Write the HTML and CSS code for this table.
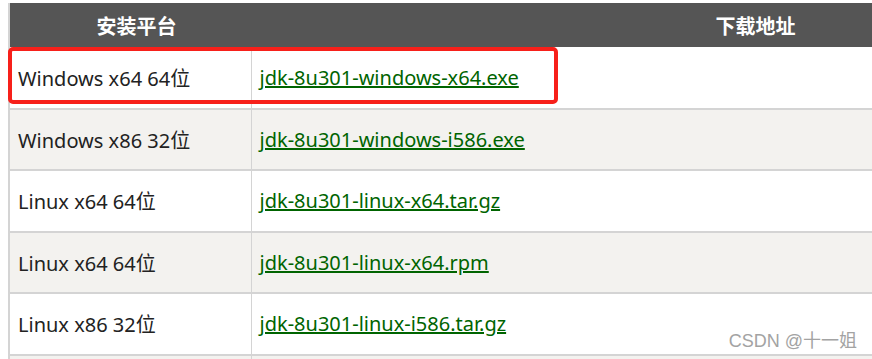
FILE: index.html
```html
<!DOCTYPE html>
<html lang="zh-CN">
<head>
    <meta charset="UTF-8">
    <title>JDK 8u301 下载</title>
    <link rel="stylesheet" href="styles.css">
</head>
<body>

    <div class="page">
        <table class="downloads">
            <thead>
                <tr>
                    <th class="col-platform">安装平台</th>
                    <th class="col-link">下载地址</th>
                </tr>
            </thead>
            <tbody>
                <tr>
                    <td>Windows x64 64位</td>
                    <td><a href="#">jdk-8u301-windows-x64.exe</a></td>
                </tr>
                <tr class="alt">
                    <td>Windows x86 32位</td>
                    <td><a href="#">jdk-8u301-windows-i586.exe</a></td>
                </tr>
                <tr>
                    <td>Linux x64 64位</td>
                    <td><a href="#">jdk-8u301-linux-x64.tar.gz</a></td>
                </tr>
                <tr class="alt">
                    <td>Linux x64 64位</td>
                    <td><a href="#">jdk-8u301-linux-x64.rpm</a></td>
                </tr>
                <tr>
                    <td>Linux x86 32位</td>
                    <td><a href="#">jdk-8u301-linux-i586.tar.gz</a></td>
                </tr>
                <!-- next row only peeks in at the bottom edge -->
                <tr class="alt">
                    <td></td>
                    <td></td>
                </tr>
            </tbody>
        </table>

        <!-- highlight drawn over the first row -->
        <div class="highlight"></div>

        <div class="watermark">CSDN @十一姐</div>
    </div>

</body>
</html>
```

FILE: styles.css
```css
* {
    margin: 0;
    padding: 0;
    box-sizing: border-box;
}

body {
    width: 872px;
    height: 359px;
    background-color: #fff;
    font-family: 'Noto Sans', 'Noto Sans CJK SC', sans-serif;
    color: #222;
    overflow: hidden;
}

.page {
    position: relative;
    height: 100%;
    padding: 3px 0 0 8px;
    overflow: hidden;
}

.downloads {
    width: 1252px;
    border-collapse: collapse;
    table-layout: fixed;
    border-left: 2px solid #d4d4d4;
}

.downloads th {
    height: 44px;
    background-color: #555;
    color: #fff;
    font-size: 20px;
    font-weight: 700;
    text-align: center;
}

.col-platform {
    width: 242px;
    padding-left: 12px;
}

.downloads td {
    height: 61.5px;
    padding: 0 8px;
    font-size: 20px;
    border-bottom: 2px solid #d4d4d4;
    white-space: nowrap;
}

.downloads td:first-child {
    border-right: 1px solid #d4d4d4;
}

.downloads tr.alt td {
    background-color: #f3f2ef;
}

.downloads a {
    color: #006400;
    text-decoration: underline;
}

.highlight {
    position: absolute;
    top: 47px;
    left: 8px;
    width: 550px;
    height: 57px;
    border: 4px solid #f7201a;
    border-radius: 5px;
}

.watermark {
    position: absolute;
    right: 15px;
    bottom: 7px;
    font-family: 'Liberation Sans', 'Noto Sans CJK SC', sans-serif;
    font-size: 18px;
    color: #a3a3a3;
    text-shadow: 0 0 2px #fff;
}
```
